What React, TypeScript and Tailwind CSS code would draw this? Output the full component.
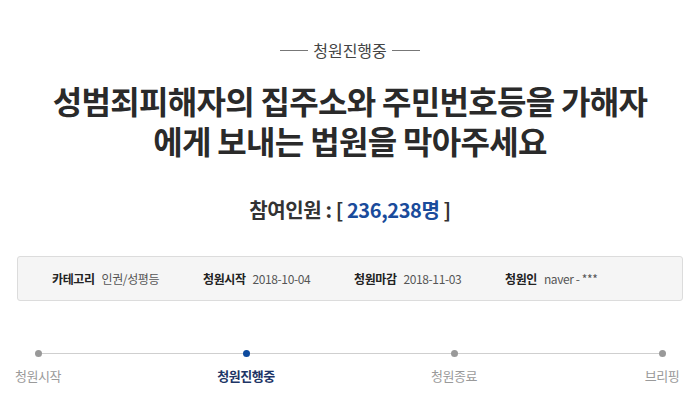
const steps = [
  { label: '청원시작', active: false },
  { label: '청원진행중', active: true },
  { label: '청원종료', active: false },
  { label: '브리핑', active: false },
];

const info = [
  { name: '카테고리', value: '인권/성평등' },
  { name: '청원시작', value: '2018-10-04' },
  { name: '청원마감', value: '2018-11-03' },
  { name: '청원인', value: 'naver - ***' },
];

export default function App() {
  return (
    <div
      className="w-[700px] h-[403px] overflow-hidden bg-white text-[#333]"
      style={{ fontFamily: '"Noto Sans CJK KR", "Noto Sans", sans-serif' }}
    >
      {/* status */}
      <div className="flex items-center justify-center gap-[5px] pt-[38px] h-[62px]">
        <span className="block w-[28px] h-px bg-[#777]" />
        <span className="text-[16px] leading-[24px] text-[#444]">청원진행중</span>
        <span className="block w-[28px] h-px bg-[#777]" />
      </div>

      {/* title */}
      <h1 className="mt-[18px] text-center text-[32px] leading-[40px] font-bold tracking-[-0.7px] text-[#2a2a2a]">
        <span className="block">성범죄피해자의 집주소와 주민번호등을 가해자</span>
        <span className="block">에게 보내는 법원을 막아주세요</span>
      </h1>

      {/* count */}
      <div className="mt-[37px] text-center text-[20px] leading-[26px] font-bold tracking-[-0.4px] text-[#333]">
        참여인원 : [ <span className="text-[#1a4b9b]">236,238명</span> ]
      </div>

      {/* info box */}
      <div className="mx-[17px] mt-[33px] h-[45px] rounded-[3px] border border-[#dcdcdc] bg-[#f5f5f5] flex items-center pl-[34px] text-[12px] tracking-[-0.4px]">
        {info.map((item) => (
          <div key={item.name} className="flex items-center w-[151px] gap-[7px]">
            <span className="font-bold text-[#222]">{item.name}</span>
            <span className="text-[#555]">{item.value}</span>
          </div>
        ))}
      </div>

      {/* progress */}
      <div className="relative mx-[38px] mt-[49px]">
        <div className="absolute left-0 right-0 top-[3px] h-px bg-[#cfcfcf]" />
        <div className="relative flex justify-between">
          {steps.map((s) => (
            <div key={s.label} className="w-0 flex flex-col items-center">
              <span
                className={
                  s.active
                    ? 'block w-[7px] h-[7px] shrink-0 rounded-full bg-[#0d4a9e]'
                    : 'block w-[7px] h-[7px] shrink-0 rounded-full bg-[#999]'
                }
              />
              <span
                className={
                  s.active
                    ? 'mt-[10px] whitespace-nowrap text-[13px] leading-[18px] font-bold tracking-[-0.5px] text-[#1e3566]'
                    : 'mt-[10px] whitespace-nowrap text-[13px] leading-[18px] tracking-[-0.5px] text-[#9a9a9a]'
                }
              >
                {s.label}
              </span>
            </div>
          ))}
        </div>
      </div>
    </div>
  );
}
